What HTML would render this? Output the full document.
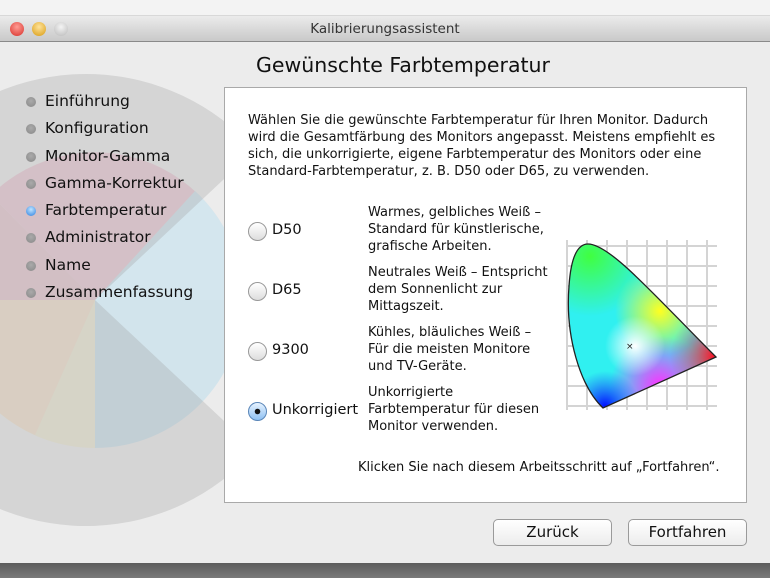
<!DOCTYPE html>
<html><head><meta charset="utf-8"><style>
*{margin:0;padding:0;box-sizing:border-box}
body{width:770px;height:578px;overflow:hidden;background:#f3f3f3;font-family:"DejaVu Sans","Liberation Sans",sans-serif;color:#111;position:relative}
.win{position:absolute;left:0;top:15px;width:770px;height:548px;background:#ececec;overflow:hidden}
.tb{position:absolute;left:0;top:0;width:770px;height:27px;background:linear-gradient(#ebebeb,#c9c9c9);border-bottom:1px solid #8a8a8a;border-top:1px solid #d8d8d8}
.tb .t{position:absolute;left:0;width:770px;top:5px;text-align:center;font-size:13.5px;color:#333}
.dot{position:absolute;top:6px;width:14px;height:14px;border-radius:50%}
.shadow{position:absolute;left:0;top:563px;width:770px;height:15px;background:linear-gradient(#5c5c5c,#7a7a7a)}
.side{position:absolute;left:24px;top:92px;font-size:15.5px}
.side div{height:27.3px;position:relative;padding-left:21px;white-space:nowrap}
.side div:before{content:"";position:absolute;left:2px;top:5px;width:10px;height:10px;border-radius:50%;background:radial-gradient(circle at 50% 40%,#aaa,#888)}
.side div.a:before{background:radial-gradient(circle at 50% 35%,#bfe4ff,#2a7fe0)}
h1{position:absolute;left:256px;top:53px;font-size:20.5px;font-weight:normal;white-space:nowrap}
.panel{position:absolute;left:224px;top:87px;width:523px;height:416px;background:#fff;border:1px solid #a9a9a9}
.p{position:absolute;font-size:13px;line-height:17px;white-space:nowrap}
.r{position:absolute;left:248px;width:19px;height:19px;border-radius:50%;border:1px solid #999;background:linear-gradient(#fff,#ddd)}
.r.on{background:radial-gradient(circle,#111 0 2.5px,transparent 3px),linear-gradient(#e6f2ff,#8ec0f2);border-color:#5a86b8}
.lab{position:absolute;left:272px;font-size:14.5px;white-space:nowrap}
.btn{position:absolute;top:519px;height:27px;border:1px solid #9a9a9a;border-radius:5px;background:linear-gradient(#fff,#ececec);font-size:15px;text-align:center;line-height:25px}
</style></head><body>
<div class="win">
<svg style="position:absolute;left:0;top:0" width="770" height="548">
<g transform="translate(95,285)">
<path d="M0 0 L148 0 A148 148 0 0 0 -104 -105 Z" fill="#ebcfd8"/>
<path d="M0 0 L-104 -105 A148 148 0 0 0 -148 0 Z" fill="#e8cdd5"/>
<path d="M0 0 L148 0 A148 148 0 0 1 0 148 Z" fill="#d2e4ec"/>
<path d="M0 0 L100 -109 A148 148 0 0 1 148 0 Z" fill="#d4e6ee"/>
<path d="M0 0 L0 148 A148 148 0 0 1 -148 0 Z" fill="#eeebd8"/>
<path d="M0 0 L-148 0 A148 148 0 0 0 -60 135 Z" fill="#f2e2d2"/>
<path d="M0 0 L160 -150 A226 226 0 1 0 160 150 Z" fill="#a0a0a0" opacity="0.30"/>
</g>
</svg>
<div class="tb"><div class="dot" style="left:10px;background:radial-gradient(circle at 50% 35%,#ff9c94,#d8302a)"></div><div class="dot" style="left:32px;background:radial-gradient(circle at 50% 35%,#ffe39a,#d89b12)"></div><div class="dot" style="left:54px;background:radial-gradient(circle at 50% 35%,#f4f4f4,#b9b9b9)"></div><div class="t">Kalibrierungsassistent</div></div>
</div>
<div class="side">
<div>Einführung</div><div>Konfiguration</div><div>Monitor-Gamma</div><div>Gamma-Korrektur</div><div class="a">Farbtemperatur</div><div>Administrator</div><div>Name</div><div>Zusammenfassung</div>
</div>
<h1>Gewünschte Farbtemperatur</h1>
<div class="panel"></div>
<div class="p" style="left:248px;top:112px">Wählen Sie die gewünschte Farbtemperatur für Ihren Monitor. Dadurch<br>wird die Gesamtfärbung des Monitors angepasst. Meistens empfiehlt es<br>sich, die unkorrigierte, eigene Farbtemperatur des Monitors oder eine<br>Standard-Farbtemperatur, z. B. D50 oder D65, zu verwenden.</div>
<div class="r" style="top:222px"></div><div class="lab" style="top:222px">D50</div>
<div class="r" style="top:282px"></div><div class="lab" style="top:282px">D65</div>
<div class="r" style="top:342px"></div><div class="lab" style="top:342px">9300</div>
<div class="r on" style="top:402px"></div><div class="lab" style="top:402px">Unkorrigiert</div>
<div class="p" style="left:368px;top:204px">Warmes, gelbliches Weiß –<br>Standard für künstlerische,<br>grafische Arbeiten.</div>
<div class="p" style="left:368px;top:264px">Neutrales Weiß – Entspricht<br>dem Sonnenlicht zur<br>Mittagszeit.</div>
<div class="p" style="left:368px;top:324px">Kühles, bläuliches Weiß –<br>Für die meisten Monitore<br>und TV-Geräte.</div>
<div class="p" style="left:368px;top:384px">Unkorrigierte<br>Farbtemperatur für diesen<br>Monitor verwenden.</div>
<div class="p" style="left:358px;top:459px">Klicken Sie nach diesem Arbeitsschritt auf „Fortfahren“.</div>
<svg style="position:absolute;left:560px;top:236px" width="165" height="180">
<defs>
<clipPath id="c"><path d="M43 172 C20 150 5 100 9 50 C11 20 18 8 28 8 C50 8 95 60 156 121 Z"/></clipPath>
<radialGradient id="g1" cx="30" cy="20" r="60" gradientUnits="userSpaceOnUse"><stop offset="0" stop-color="#40ff40"/><stop offset="1" stop-color="#40ff40" stop-opacity="0"/></radialGradient>
<radialGradient id="g2" cx="45" cy="170" r="35" gradientUnits="userSpaceOnUse"><stop offset="0" stop-color="#0010ff"/><stop offset="1" stop-color="#2040ff" stop-opacity="0"/></radialGradient>
<radialGradient id="g3" cx="155" cy="120" r="45" gradientUnits="userSpaceOnUse"><stop offset="0" stop-color="#ff1020"/><stop offset="1" stop-color="#ff3060" stop-opacity="0"/></radialGradient>
<radialGradient id="g4" cx="100" cy="75" r="45" gradientUnits="userSpaceOnUse"><stop offset="0" stop-color="#ffff20"/><stop offset="1" stop-color="#ffff20" stop-opacity="0"/></radialGradient>
<radialGradient id="g5" cx="100" cy="150" r="50" gradientUnits="userSpaceOnUse"><stop offset="0" stop-color="#ff30ff"/><stop offset="1" stop-color="#ff30ff" stop-opacity="0"/></radialGradient>
<radialGradient id="g6" cx="75" cy="110" r="30" gradientUnits="userSpaceOnUse"><stop offset="0" stop-color="#fff"/><stop offset="1" stop-color="#fff" stop-opacity="0"/></radialGradient>
</defs>
<g stroke="#d4d4d4" stroke-width="2">
<path d="M7 4V174M27 4V174M47 4V174M67 4V174M87 4V174M107 4V174M127 4V174M147 4V174M7 10H157M7 30H157M7 50H157M7 70H157M7 90H157M7 110H157M7 130H157M7 150H157M7 170H157"/>
</g>
<g clip-path="url(#c)">
<rect width="165" height="180" fill="#30f0f0"/>
<rect width="165" height="180" fill="url(#g1)"/>
<rect width="165" height="180" fill="url(#g4)"/>
<rect width="165" height="180" fill="url(#g5)"/>
<rect width="165" height="180" fill="url(#g3)"/>
<rect width="165" height="180" fill="url(#g2)"/>
<rect width="165" height="180" fill="url(#g6)"/>
</g>
<path d="M43 172 C20 150 5 100 9 50 C11 20 18 8 28 8 C50 8 95 60 156 121 Z" fill="none" stroke="#222" stroke-width="1.3"/>
<text x="66" y="113" font-size="9" font-family="DejaVu Sans" fill="#222">×</text>
</svg>
<div class="btn" style="left:493px;width:119px">Zurück</div>
<div class="btn" style="left:628px;width:119px">Fortfahren</div>
<div class="shadow"></div>
</body></html>
